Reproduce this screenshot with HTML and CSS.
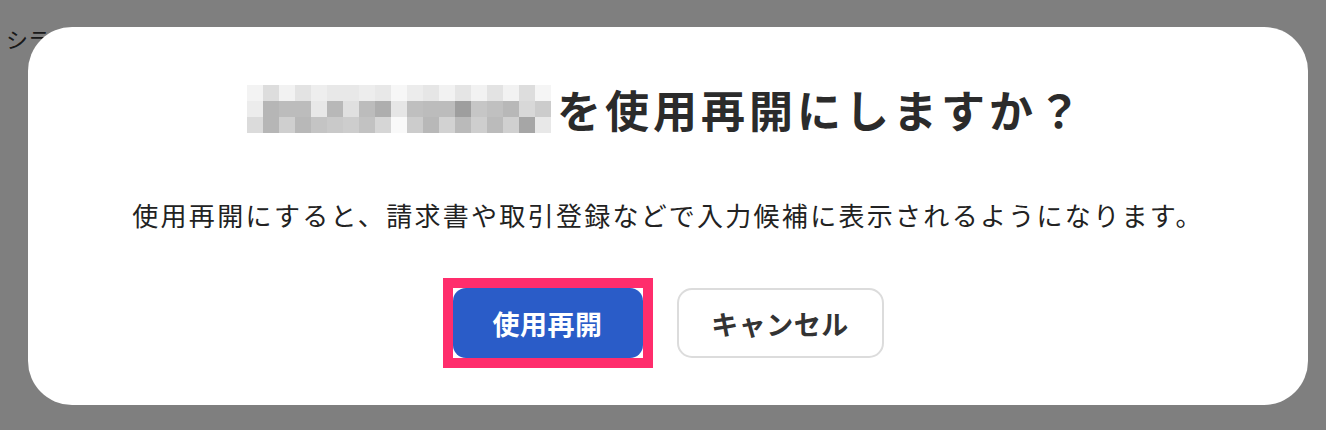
FILE: index.html
```html
<!DOCTYPE html>
<html lang="ja">
<head>
  <meta charset="UTF-8" />
  <meta name="viewport" content="width=device-width, initial-scale=1.0" />
  <title>使用再開</title>
  <link rel="stylesheet" href="styles.css">
</head>
<body>
  <p class="page-title">シラバス</p>

  <div class="overlay">
    <div class="modal">
      <h2 class="modal-title">
        <span class="mosaic" id="mosaic"></span>
        <span>を使用再開にしますか？</span>
      </h2>
      <p class="modal-text">使用再開にすると、請求書や取引登録などで入力候補に表示されるようになります。</p>
      <div class="actions">
        <span class="highlight">
          <button type="button" class="btn btn-primary">使用再開</button>
        </span>
        <button type="button" class="btn btn-secondary">キャンセル</button>
      </div>
    </div>
  </div>

  <script>
    // blurred name: 19 x 3 grey cells
    const shades = [
      'f3','dd','f2','e3','ee','e8','e8','ed','e8','f7','ec','e6','f2','e5','f2','e3','f2','dd','f5',
      'ec','b6','bc','bc','e8','b8','e0','bc','ae','e6','bf','bc','bc','9e','c6','c0','b8','d8','cc',
      'db','b6','cf','b8','c4','c9','cd','c2','d6','f9','cc','b8','d2','ba','ce','bb','d0','a6','e8'
    ];
    const mosaic = document.getElementById('mosaic');
    shades.forEach(s => {
      const cell = document.createElement('i');
      cell.style.background = '#' + s + s + s;
      mosaic.appendChild(cell);
    });
  </script>
</body>
</html>
```

FILE: styles.css
```css
body {
  margin: 0;
  background: #fff;
  font-family: "Noto Sans CJK JP", "Noto Sans", sans-serif;
  color: #222;
}
.page-title {
  margin: 0;
  padding: 23px 0 0 6px;
  font-size: 22px;
  line-height: 30px;
  color: #333;
}
.overlay {
  position: fixed;
  inset: 0;
  background: rgba(0, 0, 0, 0.5);
  padding: 27px 0 0 28px;
}
.modal {
  box-sizing: border-box;
  width: 1280px;
  height: 378px;
  background: #fff;
  border-radius: 44px;
  padding-top: 56px;
  text-align: center;
}
.modal-title {
  margin: 0;
  display: flex;
  justify-content: center;
  align-items: center;
  gap: 6px;
  padding-right: 4px;
  font-size: 44px;
  line-height: 52px;
  font-weight: 700;
  letter-spacing: 4px;
  color: #2b2b2b;
}
.mosaic {
  display: grid;
  grid-template-columns: repeat(19, 16px);
  grid-auto-rows: 16px;
}
.mosaic i {
  display: block;
}
.modal-text {
  margin: 62px 0 0;
  font-size: 26px;
  line-height: 36px;
  letter-spacing: 2.3px;
  color: #222;
}
.actions {
  margin-top: 55px;
  display: flex;
  justify-content: center;
  gap: 34px;
}
.highlight {
  display: block;
  background: #fff;
  outline: 10px solid #ff2d6c;
}
.btn {
  height: 70px;
  border-radius: 13px;
  font-family: inherit;
  font-size: 27px;
  font-weight: 700;
  letter-spacing: 0.5px;
  cursor: pointer;
}
.btn-primary {
  display: block;
  width: 190px;
  border: none;
  background: #2a5cc8;
  color: #fff;
}
.btn-secondary {
  width: 207px;
  border: 2px solid #dcdcdc;
  border-radius: 15px;
  background: #fff;
  color: #333;
}
```
